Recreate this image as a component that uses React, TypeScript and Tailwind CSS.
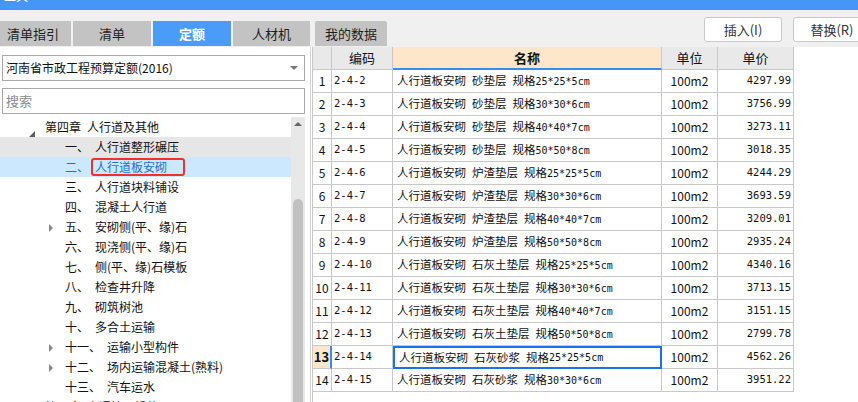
import React from "react";

const FONT = '"Noto Sans CJK SC", "Liberation Sans", sans-serif';
const MONO = '"DejaVu Sans Mono", "Liberation Mono", monospace';

const treeRows: { num?: string; text: string; level: number; arrow?: "down" | "right"; state?: "hover" | "sel" }[] = [
  { text: "第四章", num: "人行道及其他", level: 0, arrow: "down" },
  { num: "一、", text: "人行道整形碾压", level: 1, state: "hover" },
  { num: "二、", text: "人行道板安砌", level: 1, state: "sel" },
  { num: "三、", text: "人行道块料铺设", level: 1 },
  { num: "四、", text: "混凝土人行道", level: 1 },
  { num: "五、", text: "安砌侧(平、缘)石", level: 1, arrow: "right" },
  { num: "六、", text: "现浇侧(平、缘)石", level: 1 },
  { num: "七、", text: "侧(平、缘)石模板", level: 1 },
  { num: "八、", text: "检查井升降", level: 1 },
  { num: "九、", text: "砌筑树池", level: 1 },
  { num: "十、", text: "多合土运输", level: 1 },
  { num: "十一、", text: "运输小型构件", level: 1, arrow: "right" },
  { num: "十二、", text: "场内运输混凝土(熟料)", level: 1, arrow: "right" },
  { num: "十三、", text: "汽车运水", level: 1 },
  { text: "第五章", num: "交通管理设施", level: 0 },
];

const rows = [
  ["2-4-2", "人行道板安砌 砂垫层 规格25*25*5cm", "4297.99"],
  ["2-4-3", "人行道板安砌 砂垫层 规格30*30*6cm", "3756.99"],
  ["2-4-4", "人行道板安砌 砂垫层 规格40*40*7cm", "3273.11"],
  ["2-4-5", "人行道板安砌 砂垫层 规格50*50*8cm", "3018.35"],
  ["2-4-6", "人行道板安砌 炉渣垫层 规格25*25*5cm", "4244.29"],
  ["2-4-7", "人行道板安砌 炉渣垫层 规格30*30*6cm", "3693.59"],
  ["2-4-8", "人行道板安砌 炉渣垫层 规格40*40*7cm", "3209.01"],
  ["2-4-9", "人行道板安砌 炉渣垫层 规格50*50*8cm", "2935.24"],
  ["2-4-10", "人行道板安砌 石灰土垫层 规格25*25*5cm", "4340.16"],
  ["2-4-11", "人行道板安砌 石灰土垫层 规格30*30*6cm", "3713.15"],
  ["2-4-12", "人行道板安砌 石灰土垫层 规格40*40*7cm", "3151.15"],
  ["2-4-13", "人行道板安砌 石灰土垫层 规格50*50*8cm", "2799.78"],
  ["2-4-14", "人行道板安砌 石灰砂浆 规格25*25*5cm", "4562.26"],
  ["2-4-15", "人行道板安砌 石灰砂浆 规格30*30*6cm", "3951.22"],
];

function Tab({ label, active, className = "" }: { label: string; active?: boolean; className?: string }) {
  return (
    <div
      className={
        "h-[25px] flex items-center text-[13px] " +
        (active ? "bg-[#4a9cf8] text-white font-bold" : "bg-[#c3c3c3] text-[#1e1e1e]") +
        " " +
        className
      }
    >
      {label}
    </div>
  );
}

function NameText({ text }: { text: string }) {
  const parts = text.split(" ");
  return (
    <span className="flex items-center text-[11.5px]">
      {parts.map((p, i) => {
        const segs = p.split(/([\x21-\x7e]+)/).filter((s) => s.length > 0);
        return (
          <span key={i} className={"flex items-center " + (i > 0 ? "ml-[6px]" : "")}>
            {segs.map((s, j) =>
              /^[\x21-\x7e]+$/.test(s) ? (
                <span key={j} className="text-[10px]" style={{ fontFamily: MONO }}>
                  {s}
                </span>
              ) : (
                <span key={j}>{s}</span>
              )
            )}
          </span>
        );
      })}
    </span>
  );
}

export default function App() {
  return (
    <div className="w-[858px] h-[402px] overflow-hidden bg-[#f0f0f0] flex flex-col" style={{ fontFamily: FONT }}>
      {/* top title bar */}
      <div className="h-[10px] bg-[#4596f6] overflow-hidden relative">
        <span className="absolute left-[4px] top-[-11px] text-white text-[12px] leading-[14px]">工具</span>
      </div>
      {/* tabs + buttons */}
      <div className="h-[37px] flex items-start">
        <div className="flex items-start mt-[11px] gap-[2px]">
          <Tab label="清单指引" className="w-[71px] pl-[7px]" />
          <Tab label="清单" className="w-[78px] justify-center" />
          <Tab label="定额" active className="w-[78px] justify-center" />
          <Tab label="人材机" className="w-[77px] justify-center" />
          <div className="w-[1px]" />
          <Tab label="我的数据" className="w-[72px] justify-center rounded-t-[2px]" />
        </div>
        <div className="flex-1" />
        <div className="flex gap-[11px] mt-[7px]">
          <button className="w-[78px] h-[25px] bg-white border border-[#c9c9c9] rounded-[3px] text-[13px] text-[#333] flex items-center justify-center">
            插入(I)
          </button>
          <button className="w-[78px] h-[25px] bg-white border border-[#c9c9c9] rounded-[3px] text-[13px] text-[#333] flex items-center justify-center mr-[-13px]">
            替换(R)
          </button>
        </div>
      </div>
      {/* main */}
      <div className="flex flex-1 min-h-0">
        {/* left */}
        <div className="w-[311px] bg-white flex flex-col pt-[8px] border-r-[1px] border-[#d4d4d4]">
          <div className="mx-[2px] w-[303px] h-[26px] border border-[#a9a9a9] flex items-center pl-[3px] text-[12px] text-[#111] relative">
            河南省市政工程预算定额(2016)
            <div className="absolute right-[6px] top-[10px] w-0 h-0 border-l-[4px] border-r-[4px] border-t-[4px] border-l-transparent border-r-transparent border-t-[#777]" />
          </div>
          <div className="mx-[2px] mt-[7px] w-[303px] h-[26px] border border-[#a9a9a9] flex items-center pl-[3px] text-[13px] text-[#8a8a8a]">
            搜索
          </div>
          <div className="flex mt-[3px] flex-1 min-h-0">
            <div className="w-[291px] flex flex-col">
              {treeRows.map((r, i) => (
                <div
                  key={i}
                  className={
                    "h-[20px] shrink-0 flex items-center text-[12px] relative " +
                    (r.state === "hover" ? "bg-[#e6e6e6] " : r.state === "sel" ? "bg-[#cce8ff] " : "") +
                    (r.state === "sel" ? "text-[#1f6fd6]" : "text-[#111]")
                  }
                >
                  {r.level === 0 ? (
                    <>
                      <div className="w-[29px]" />
                      <div className="w-[16px] h-[20px] relative">
                        {r.arrow === "down" && (
                          <div className="absolute left-0 top-[8px] w-0 h-0 border-l-[6px] border-t-[6px] border-l-transparent border-t-transparent border-r-0 border-b-[6px] border-b-[#5a5a5a]" />
                        )}
                      </div>
                      <span>{r.text}</span>
                      <span className="ml-[6px]">{r.num}</span>
                    </>
                  ) : (
                    <>
                      <div className="w-[49px]" />
                      <div className="w-[16px] h-[20px] relative">
                        {r.arrow === "right" && (
                          <div className="absolute left-0 top-[7px] w-0 h-0 border-t-[4px] border-b-[4px] border-l-[4px] border-t-transparent border-b-transparent border-l-[#8a8a8a]" />
                        )}
                      </div>
                      <span>{r.num}</span>
                      {r.state === "sel" ? (
                        <span className="ml-[2px] border-2 border-[#f0302a] rounded-[3px] pl-[2px] pr-[16px] h-[18px] flex items-center">
                          {r.text}
                        </span>
                      ) : (
                        <span className="ml-[6px]">{r.text}</span>
                      )}
                    </>
                  )}
                </div>
              ))}
            </div>
            <div className="w-[14px] bg-[#e8e8e8] relative">
              <div className="absolute left-[3px] top-[5px] w-0 h-0 border-l-[4px] border-r-[4px] border-b-[4px] border-l-transparent border-r-transparent border-b-[#666]" />
              <div className="absolute left-[2px] top-[82px] w-[10px] h-[260px] bg-[#c1c1c1] rounded-t-[5px]" />
            </div>
          </div>
        </div>
        {/* right */}
        <div className="flex-1 bg-white pl-[1px]">
          <div className="w-[482px] border-l border-[#c8c8c8] h-full">
            <div className="grid grid-cols-[19px_61px_269px_56px_76px] text-[12px] text-[#111]">
              {/* header */}
              <div className="h-[23px] bg-[#e9e9e9] border-r border-b border-[#c8c8c8]" />
              <div className="h-[23px] bg-[#e9e9e9] border-r border-b border-[#c8c8c8] flex items-center justify-center text-[13px]">编码</div>
              <div className="h-[23px] bg-[#fde6c9] border-r border-b-2 border-b-[#3b8ce8] border-r-[#c8c8c8] flex items-center justify-center text-[13px] font-bold">名称</div>
              <div className="h-[23px] bg-[#e9e9e9] border-r border-b border-[#c8c8c8] flex items-center justify-center text-[13px]">单位</div>
              <div className="h-[23px] bg-[#e9e9e9] border-r border-b border-[#c8c8c8] flex items-center justify-center text-[13px]">单价</div>
              {rows.map((r, i) => {
                const sel = i === 12;
                return (
                  <React.Fragment key={i}>
                    <div
                      className={
                        "h-[23px] border-b flex items-center justify-center " +
                        (sel
                          ? "bg-[#fde6c9] font-bold text-[13px] border-r-2 border-r-[#3b8ce8] border-b-[#c8c8c8]"
                          : "border-r border-[#c8c8c8]")
                      }
                    >
                      {i + 1}
                    </div>
                    <div className="h-[23px] border-r border-b border-[#c8c8c8] flex items-center pl-[2px] text-[10.5px]" style={{ fontFamily: MONO }}>
                      {r[0]}
                    </div>
                    <div
                      className={
                        "h-[23px] flex items-center pl-[4px] " +
                        (sel ? "border-2 border-[#1a73e8] pl-[3px]" : "border-r border-b border-[#c8c8c8]")
                      }
                    >
                      <NameText text={r[1]} />
                    </div>
                    <div className="h-[23px] border-r border-b border-[#c8c8c8] flex items-center justify-center">100m2</div>
                    <div className="h-[23px] border-r border-b border-[#c8c8c8] flex items-center justify-end pr-[2px] text-[10.5px]" style={{ fontFamily: MONO }}>
                      {r[2]}
                    </div>
                  </React.Fragment>
                );
              })}
            </div>
          </div>
        </div>
      </div>
    </div>
  );
}
